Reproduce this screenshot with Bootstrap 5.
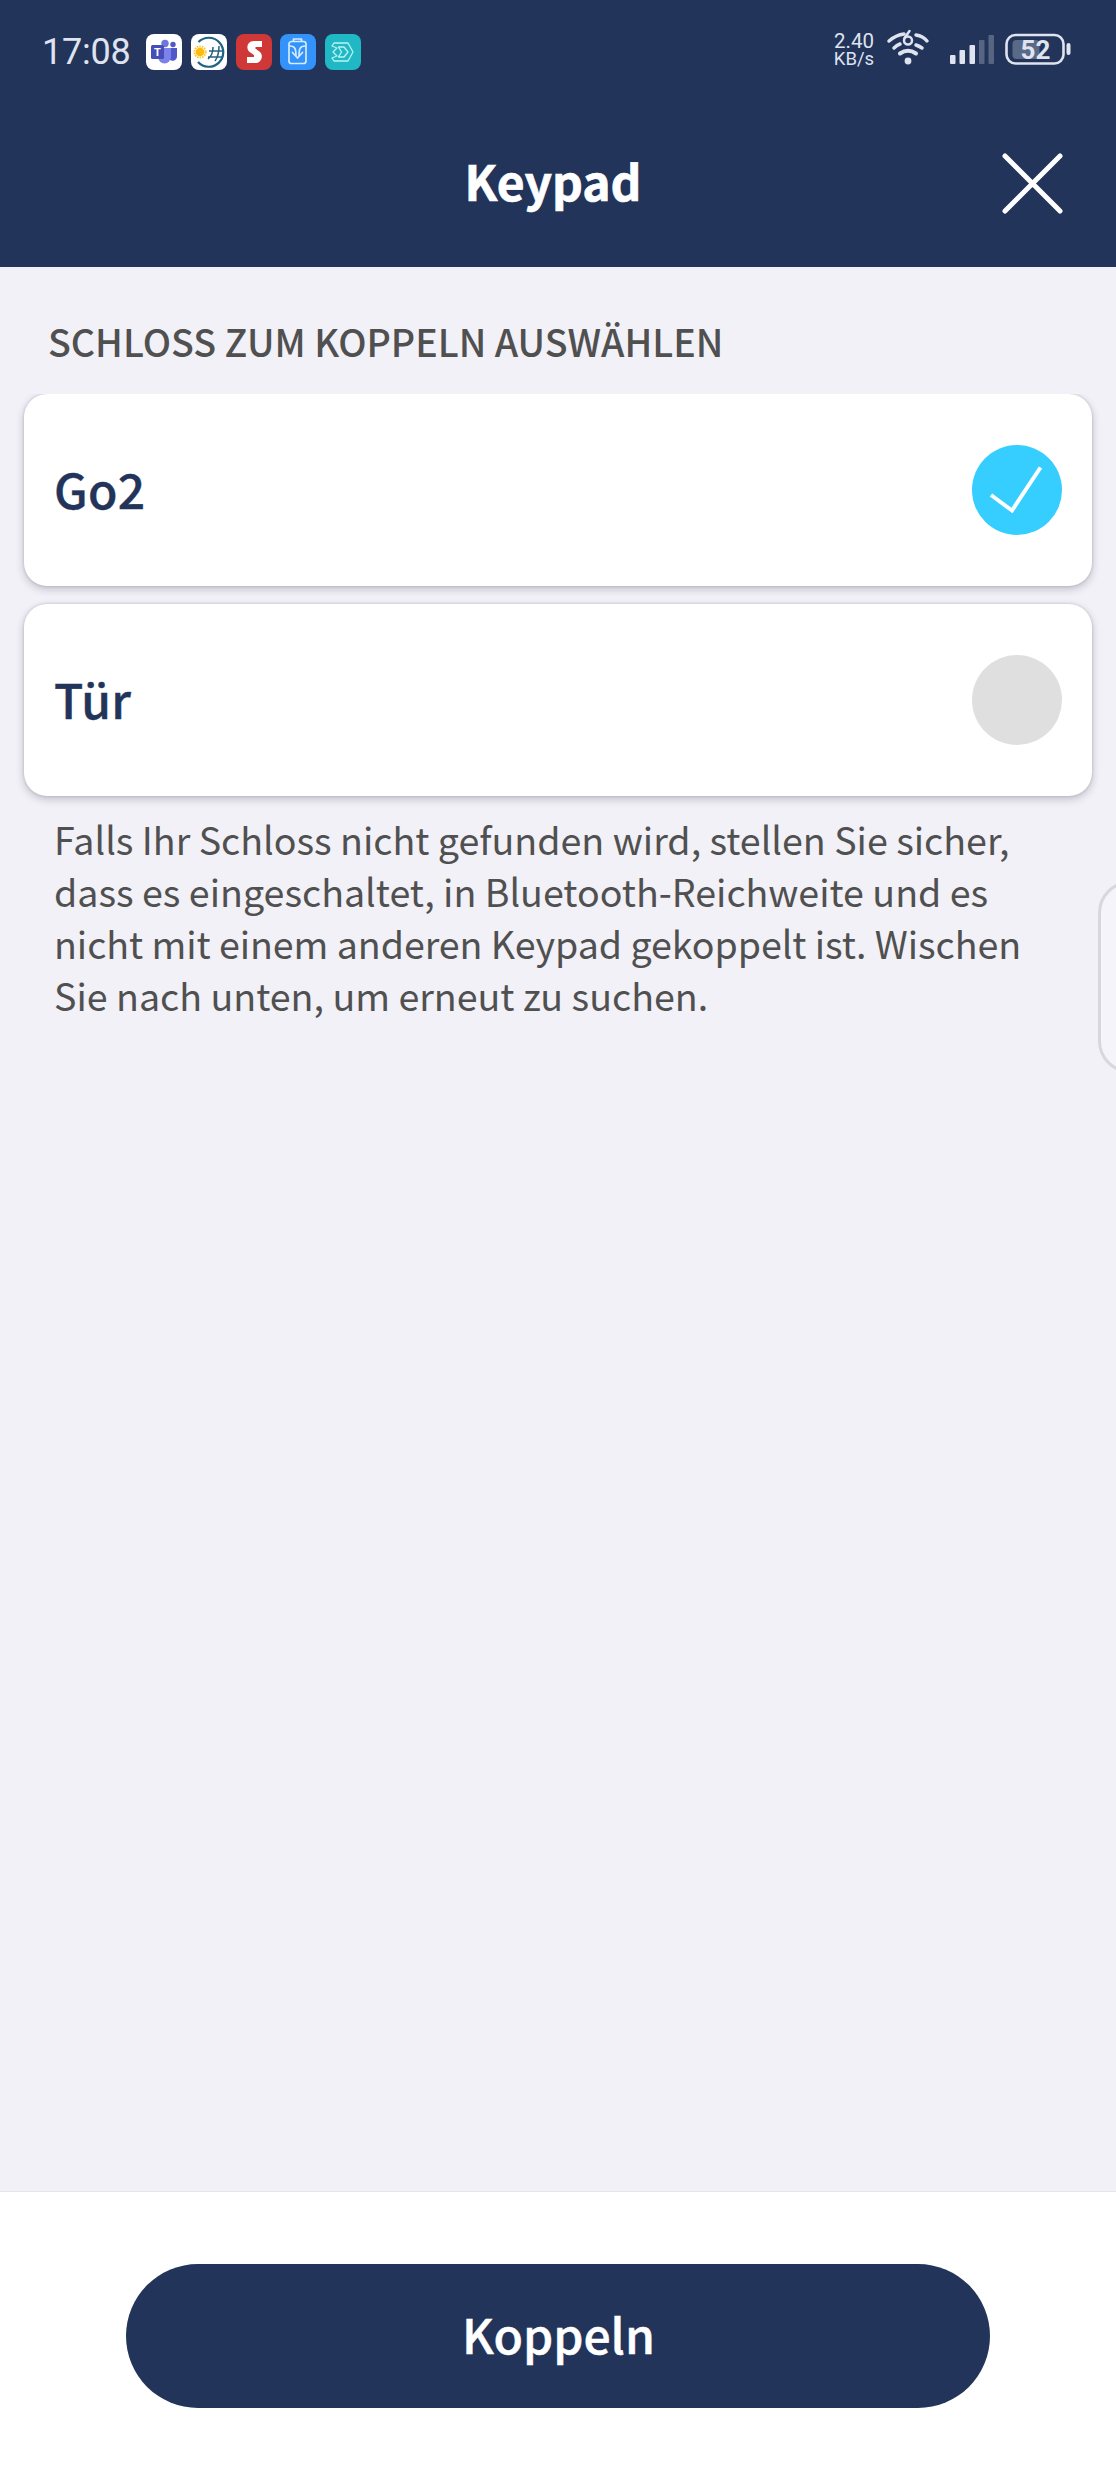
<!DOCTYPE html>
<html lang="de">
<head>
<meta charset="utf-8">
<meta name="viewport" content="width=device-width, initial-scale=1">
<title>Keypad</title>
<link href="https://cdn.jsdelivr.net/npm/bootstrap@5.3.0/dist/css/bootstrap.min.css" rel="stylesheet">
<style>
  body { background: #f2f1f8; font-family: "Noto Sans CJK SC", "Noto Sans", sans-serif; color: #505050; }
  .screen { height: 2480px; overflow: hidden; }
  .topbar { height: 267px; background: #22345a; color: #fff; }
  .statusbar { height: 104px; padding: 0 45px 0 42px; font-family: Roboto, sans-serif; color: #dfe3ef; }
  .clock { font-size: 36px; line-height: 36px; width: 104px; letter-spacing: -.2px; }
  .apps { gap: 8.8px; }
  .statusbar svg { display: block; flex: none; }
  .rate { font-size: 20.5px; line-height: 17.5px; width: 44px; margin-bottom: 3px; }
  .rate small { font-size: 18.5px; }
  .signals { margin: 0 -3px 8px -2px; }
  .titlebar { height: 163px; padding: 46px 10px 0 0; }
  .title-text { font-size: 48px; font-weight: 700; line-height: 60px; -webkit-text-stroke: .7px #fff; }
  .close-btn { width: 70px; height: 70px; right: 49px; top: 44px; }
  .section-title { font-size: 37.6px; font-weight: 500; line-height: 56px; margin: 46px 0 25px 48px; }
  .locks { padding: 0 24px; gap: 18px; clip-path: inset(0 0 -20px 0); }
  .lock-card { height: 192px; border: 0; border-radius: 23px; padding: 0 30px; box-shadow: 0 3px 8px rgba(30,30,50,.24), 0 0 3px rgba(30,30,50,.18); }
  .lock-name { font-size: 48px; font-weight: 500; line-height: 60px; margin-bottom: 4px; letter-spacing: .3px; color: #22345a; -webkit-text-stroke: .4px #22345a; }
  .dot { width: 90px; height: 90px; background: #dfdfdf; }
  .dot.on { background: #35ceff; }
  .hint { font-size: 37.6px; line-height: 52px; margin: 17px 0 0 54px; white-space: nowrap; }
  .hint .snug { letter-spacing: -.06px; }
  .edge-handle { right: -62px; top: 881px; width: 80px; height: 192px; border: 3px solid #d8d7de; border-radius: 32px; background: #f5f4fb; }
  .footer-bar { height: 289px; border-top: 1px solid #e6e5ec; padding: 72px 126px 0; }
  .pair-btn { height: 144px; background: #22345a; color: #fff; font-size: 48px; font-weight: 500; line-height: 60px; border: 0; padding: 0 0 7px 1px; -webkit-text-stroke: .5px #fff; }
</style>
</head>
<body>
<div class="screen d-flex flex-column position-relative">
  <header class="topbar">
    <div class="statusbar d-flex align-items-center">
      <div class="clock">17:08</div>
      <div class="apps d-flex">
        <svg width="36" height="36" viewBox="0 0 36 36"><rect width="36" height="36" rx="8" fill="#fff"/><circle cx="19" cy="9.500" r="3.700" fill="#6f76dc"/><circle cx="27" cy="10.500" r="2.700" fill="#5059c9"/><path d="M23 14h8v8a4.500 4.500 0 0 1-8 3z" fill="#5059c9"/><path d="M12 14h13v9a6.500 6.500 0 0 1-13 0z" fill="#7b83eb"/><rect x="5" y="11" width="13" height="14" rx="1.500" fill="#464eb8"/><text x="11.500" y="22" text-anchor="middle" font-family="Roboto,sans-serif" font-size="11" font-weight="700" fill="#fff">T</text></svg>
        <svg width="36" height="36" viewBox="0 0 36 36"><rect width="36" height="36" rx="8" fill="#fff"/><path d="M7.500 8A14.500 14.500 0 1 1 7 28" fill="none" stroke="#1d6484" stroke-width="2.200"/><path d="M22 13c0 6-1 9-5 12M28 12c0 6-1 11-4 15M18 17h14M17 23h14" fill="none" stroke="#24617d" stroke-width="1.500"/><circle cx="9" cy="18" r="5.600" fill="none" stroke="#fbc72b" stroke-width="2" stroke-dasharray="1.500 1"/><circle cx="9" cy="18" r="4.300" fill="#fdbb0b"/></svg>
        <svg width="36" height="36" viewBox="0 0 36 36"><rect width="36" height="36" rx="8" fill="#d03838"/><path d="M26 7v6h-5.500c-1.500 0-1.500 1.500-.5 2l4 3c4 4 1 11-4.500 11H11v-6h6c1.500 0 1.500-1.500.5-2.200l-4.500-3.300C9.500 13.500 12 7 17.500 7z" fill="#fff"/></svg>
        <svg width="36" height="36" viewBox="0 0 36 36"><rect width="36" height="36" rx="8" fill="#3493fb"/><g fill="none" stroke="#d4ecff" stroke-width="1.700" stroke-linecap="round" stroke-linejoin="round"><rect x="9" y="7.500" width="17" height="22" rx="2.500"/><path d="M13.500 7V5h8v2M10 12c5 0 6 3 6 10M25 12c-5 0-6 3-6 10M12.500 18.500l5 5.500 5-5.500"/></g></svg>
        <svg width="36" height="36" viewBox="0 0 36 36"><rect width="36" height="36" rx="8" fill="#20b8c5"/><g fill="none" stroke="#b9f3f4" stroke-width="1.300" stroke-linejoin="round"><path d="M9 9h14l5 9-5 9H9l-2-3 5-2-4-4 4-4-5-2z"/><path d="M13.500 13H19l4 5-4 5h-5.500l3-5z"/></g></svg>
      </div>
      <div class="rate ms-auto text-center"><div>2.40</div><small class="d-block">KB/s</small></div>
      <svg class="signals" width="200" height="40" viewBox="0 0 200 40">
        <g fill="none" stroke="#dfe3ef" stroke-linecap="round">
          <path d="M15 13Q22 7 30 6M42 7Q49 8 53 13" stroke-width="3.500"/>
          <path d="M20 20Q23 17 26 16M42 17Q45 18 48 20" stroke-width="3.500"/>
          <path d="M26 25.500Q34 20 42 25.500" stroke-width="4"/>
          <path d="M35.500 3L30.500 10" stroke-width="2.500"/><circle cx="34" cy="12.500" r="4" stroke-width="2.500"/>
        </g>
        <circle cx="34" cy="33" r="3.400" fill="#dfe3ef"/>
        <g fill="#dfe3ef"><rect x="76" y="27" width="5.500" height="9" rx="1"/><rect x="85.500" y="22" width="5.500" height="14" rx="1"/><rect x="95.500" y="17" width="5.500" height="19" rx="1"/><g opacity=".28"><rect x="105" y="12" width="5.500" height="24" rx="1"/><rect x="114.500" y="7" width="5.500" height="29" rx="1"/></g></g>
        <rect x="132.500" y="7" width="57" height="28.500" rx="9" fill="none" stroke="#dfe3ef" stroke-width="2.600"/>
        <rect x="138.500" y="12" width="27" height="19" rx="4" fill="#dfe3ef" opacity=".3"/>
        <rect x="192.500" y="15" width="4" height="12" rx="2" fill="#dfe3ef"/>
        <text x="161.500" y="30.500" text-anchor="middle" font-family="Roboto,sans-serif" font-size="26" font-weight="700" fill="#dfe3ef">52</text>
      </svg>
    </div>
    <div class="titlebar position-relative text-center">
      <div class="title-text">Keypad</div>
      <button class="close-btn btn p-0 border-0 position-absolute" aria-label="Schließen"><svg class="d-block" width="70" height="70" viewBox="0 0 70 70"><path d="M8 8L63 63M63 8L8 63" stroke="#fff" stroke-width="5" stroke-linecap="round"/></svg></button>
    </div>
  </header>
  <main class="flex-grow-1">
    <h1 class="section-title">SCHLOSS ZUM KOPPELN AUSWÄHLEN</h1>
    <div class="locks d-flex flex-column">
      <div class="card lock-card flex-row align-items-center justify-content-between"><span class="lock-name">Go2</span><span class="dot on rounded-circle"><svg class="d-block" width="90" height="90" viewBox="0 0 90 90"><path d="M19 50L40 65.500L68.500 22.500" fill="none" stroke="#fff" stroke-width="4"/></svg></span></div>
      <div class="card lock-card flex-row align-items-center justify-content-between"><span class="lock-name">Tür</span><span class="dot rounded-circle"></span></div>
    </div>
    <p class="hint">Falls Ihr Schloss nicht gefunden wird, stellen Sie sicher,<br>dass es eingeschaltet, in Bluetooth-Reichweite und es<br><span class="snug">nicht mit einem anderen Keypad gekoppelt ist. Wischen</span><br>Sie nach unten, um erneut zu suchen.</p>
  </main>
  <div class="edge-handle position-absolute"></div>
  <footer class="footer-bar bg-white"><button class="pair-btn btn rounded-pill w-100">Koppeln</button></footer>
</div>
<script src="https://cdn.jsdelivr.net/npm/bootstrap@5.3.0/dist/js/bootstrap.bundle.min.js"></script>
</body>
</html>
